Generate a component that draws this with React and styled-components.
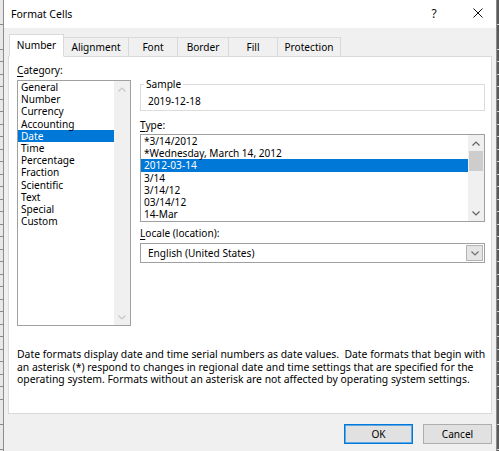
import { createGlobalStyle, styled } from "styled-components";

const GlobalStyle = createGlobalStyle`
  html, body {
    margin: 0;
    padding: 0;
    background: #fff;
  }
  body {
    font-family: "Noto Sans", "Liberation Sans", sans-serif;
    color: #000;
  }
`;

const tabs = [
  { label: "Number", w: 55 },
  { label: "Alignment", w: 66 },
  { label: "Font", w: 50 },
  { label: "Border", w: 52 },
  { label: "Fill", w: 50 },
  { label: "Protection", w: 64 },
];

const categories = [
  "General",
  "Number",
  "Currency",
  "Accounting",
  "Date",
  "Time",
  "Percentage",
  "Fraction",
  "Scientific",
  "Text",
  "Special",
  "Custom",
];

const types = [
  "*3/14/2012",
  "*Wednesday, March 14, 2012",
  "2012-03-14",
  "3/14",
  "3/14/12",
  "03/14/12",
  "14-Mar",
];

const description = [
  "Date formats display date and time serial numbers as date values.  Date formats that begin with",
  "an asterisk (*) respond to changes in regional date and time settings that are specified for the",
  "operating system. Formats without an asterisk are not affected by operating system settings.",
];

const Chevron = ({ up, color }) => (
  <svg width="8" height="5" viewBox="0 0 8 5">
    <polyline
      points={up ? "0.5,4.5 4,1 7.5,4.5" : "0.5,0.5 4,4 7.5,0.5"}
      fill="none"
      stroke={color}
      strokeWidth="1.2"
    />
  </svg>
);

const ScrollBar = ({ disabled, thumb }) => {
  const color = disabled ? "#c8c8c8" : "#606060";
  return (
    <Scroll>
      <ScrollArrow>
        <Chevron up color={color} />
      </ScrollArrow>
      <Track>{thumb && <Thumb />}</Track>
      <ScrollArrow>
        <Chevron color={color} />
      </ScrollArrow>
    </Scroll>
  );
};

export default function App() {
  return (
    <Page>
      <GlobalStyle />
      <SheetEdge $w={3} />
      <Dialog>
        <TitleBar>
          <Title>Format Cells</Title>
          <TitleButtons>
            <TitleButton $w={40}>?</TitleButton>
            <TitleButton $w={36}>
              <svg width="10" height="10" viewBox="0 0 10 10">
                <path d="M0.5 0.5 L9.5 9.5 M9.5 0.5 L0.5 9.5" stroke="#111" strokeWidth="1" />
              </svg>
            </TitleButton>
          </TitleButtons>
        </TitleBar>

        <Body>
          <TabRow>
            {tabs.map((t, i) => (
              <Tab key={t.label} $w={t.w} $active={i === 0}>
                {t.label}
              </Tab>
            ))}
          </TabRow>

          <Panel>
            <Columns>
              <LeftCol>
                <Label>
                  <u>C</u>ategory:
                </Label>
                <ListBox $h={246}>
                  <Items>
                    {categories.map((c) => (
                      <Item key={c} $selected={c === "Date"}>
                        {c}
                      </Item>
                    ))}
                  </Items>
                  <ScrollBar disabled />
                </ListBox>
              </LeftCol>

              <RightCol>
                <GroupBox>
                  <Legend>Sample</Legend>
                  <SampleValue>2019-12-18</SampleValue>
                </GroupBox>

                <Label $top={7} $bottom={2}>
                  <u>T</u>ype:
                </Label>
                <ListBox $h={88}>
                  <Items>
                    {types.map((t) => (
                      <Item key={t} $selected={t === "2012-03-14"}>
                        {t}
                      </Item>
                    ))}
                  </Items>
                  <ScrollBar thumb />
                </ListBox>

                <Label $top={4}>
                  <u>L</u>ocale (location):
                </Label>
                <Select>
                  <SelectText>English (United States)</SelectText>
                  <SelectButton>
                    <Chevron color="#707070" />
                  </SelectButton>
                </Select>
              </RightCol>
            </Columns>

            <Description>
              {description.map((line) => (
                <DescLine key={line}>{line}</DescLine>
              ))}
            </Description>
          </Panel>

          <Footer>
            <Button $default>OK</Button>
            <Button>Cancel</Button>
          </Footer>
        </Body>
      </Dialog>
      <SheetEdge $w={2} $dark />
    </Page>
  );
}

const Page = styled.div`
  display: flex;
  width: 499px;
  height: 451px;
  overflow: hidden;
  font-size: 10.1px;
`;

const SheetEdge = styled.div`
  width: ${(p) => p.$w}px;
  flex: none;
  background: ${(p) => (p.$dark ? "#5a5a5a" : "#e8e8e8")}
    repeating-linear-gradient(
      to bottom,
      transparent 0 11.5px,
      ${(p) => (p.$dark ? "#d0d0d0" : "#8a8a8a")} 11.5px 12.5px
    );
`;

const Dialog = styled.div`
  flex: 1;
  min-width: 0;
  overflow: hidden;
  display: flex;
  flex-direction: column;
  background: #f0f0f0;
  border-left: 1px solid #8c8c8c;
  border-right: 1px solid #8c8c8c;
`;

const TitleBar = styled.div`
  height: 28px;
  flex: none;
  display: flex;
  align-items: center;
  justify-content: space-between;
  background: #fff;
  padding-left: 7px;
`;

const Title = styled.div`
  font-size: 10.5px;
  margin-top: -1px;
`;

const TitleButtons = styled.div`
  display: flex;
  align-self: stretch;
  gap: 6px;
`;

const TitleButton = styled.div`
  width: ${(p) => p.$w}px;
  display: flex;
  align-items: center;
  justify-content: center;
  font-size: 12px;
  color: #111;
  padding-bottom: 2px;
`;

const Body = styled.div`
  flex: 1;
  display: flex;
  flex-direction: column;
  padding: 7px 4px 0 4px;
`;

const TabRow = styled.div`
  display: flex;
  align-items: flex-end;
  height: 22px;
  margin-left: 1px;
  margin-bottom: -1px;
  position: relative;
  z-index: 1;
`;

const Tab = styled.div`
  box-sizing: border-box;
  width: ${(p) => p.$w}px;
  height: ${(p) => (p.$active ? 23 : 20)}px;
  margin-right: -1px;
  display: flex;
  align-items: center;
  justify-content: center;
  padding-bottom: ${(p) => (p.$active ? 1 : 0)}px;
  background: ${(p) => (p.$active ? "#fff" : "#f0f0f0")};
  border: 1px solid #d9d9d9;
  border-bottom-color: ${(p) => (p.$active ? "#fff" : "#d9d9d9")};
  position: relative;
  z-index: ${(p) => (p.$active ? 1 : 0)};
`;

const Panel = styled.div`
  box-sizing: border-box;
  height: 358px;
  flex: none;
  background: #fff;
  border: 1px solid #d9d9d9;
  padding: 6px 6px 0 8px;
  display: flex;
  flex-direction: column;
`;

const Columns = styled.div`
  display: flex;
  gap: 9px;
`;

const LeftCol = styled.div`
  width: 114px;
  display: flex;
  flex-direction: column;
`;

const RightCol = styled.div`
  flex: 1;
  min-width: 0;
  display: flex;
  flex-direction: column;
`;

const Label = styled.div`
  line-height: 14px;
  height: 14px;
  margin-top: ${(p) => p.$top || 0}px;
  margin-bottom: ${(p) => (p.$bottom === undefined ? 3 : p.$bottom)}px;
  white-space: nowrap;
  u {
    text-decoration-thickness: 1px;
    text-underline-offset: 2px;
  }
`;

const ListBox = styled.div`
  box-sizing: border-box;
  height: ${(p) => p.$h}px;
  border: 1px solid #a0a0a0;
  display: flex;
  background: #fff;
`;

const Items = styled.div`
  flex: 1;
  overflow: hidden;
`;

const Item = styled.div`
  height: 12.2px;
  line-height: 12.2px;
  padding-left: 3px;
  white-space: nowrap;
  background: ${(p) => (p.$selected ? "#0078d7" : "transparent")};
  color: ${(p) => (p.$selected ? "#fff" : "#000")};
`;

const Scroll = styled.div`
  width: 16px;
  flex: none;
  display: flex;
  flex-direction: column;
  background: #f0f0f0;
`;

const ScrollArrow = styled.div`
  height: 16px;
  flex: none;
  display: flex;
  align-items: center;
  justify-content: center;
`;

const Track = styled.div`
  flex: 1;
`;

const Thumb = styled.div`
  height: 20px;
  margin: 0 1px;
  background: #cdcdcd;
`;

const GroupBox = styled.fieldset`
  margin: 14px 0 0 0;
  padding: 3px 7px 2px 7px;
  border: 1px solid #dcdcdc;
  min-width: 0;
`;

const Legend = styled.legend`
  line-height: 14px;
  padding: 0 2px;
  margin-left: -4px;
`;

const SampleValue = styled.div`
  line-height: 14px;
`;

const Select = styled.div`
  box-sizing: border-box;
  height: 20px;
  border: 1px solid #a0a0a0;
  display: flex;
  align-items: stretch;
  background: #fff;
`;

const SelectText = styled.div`
  flex: 1;
  display: flex;
  align-items: center;
  padding-left: 7px;
`;

const SelectButton = styled.div`
  width: 15px;
  margin: 1px;
  display: flex;
  align-items: center;
  justify-content: center;
  background: #e5e5e5;
  border: 1px solid #b4b4b4;
`;

const Description = styled.div`
  margin-top: 22px;
  font-size: 10.4px;
`;

const DescLine = styled.div`
  line-height: 12.5px;
  white-space: pre;
`;

const Footer = styled.div`
  display: flex;
  justify-content: flex-end;
  gap: 10px;
  padding-top: 10px;
`;

const Button = styled.div`
  box-sizing: border-box;
  width: 69px;
  height: 20px;
  display: flex;
  align-items: center;
  justify-content: center;
  background: #e1e1e1;
  border: 1px solid ${(p) => (p.$default ? "#0078d7" : "#adadad")};
  box-shadow: ${(p) => (p.$default ? "inset 0 0 0 1px #5fa8e6" : "none")};
`;
